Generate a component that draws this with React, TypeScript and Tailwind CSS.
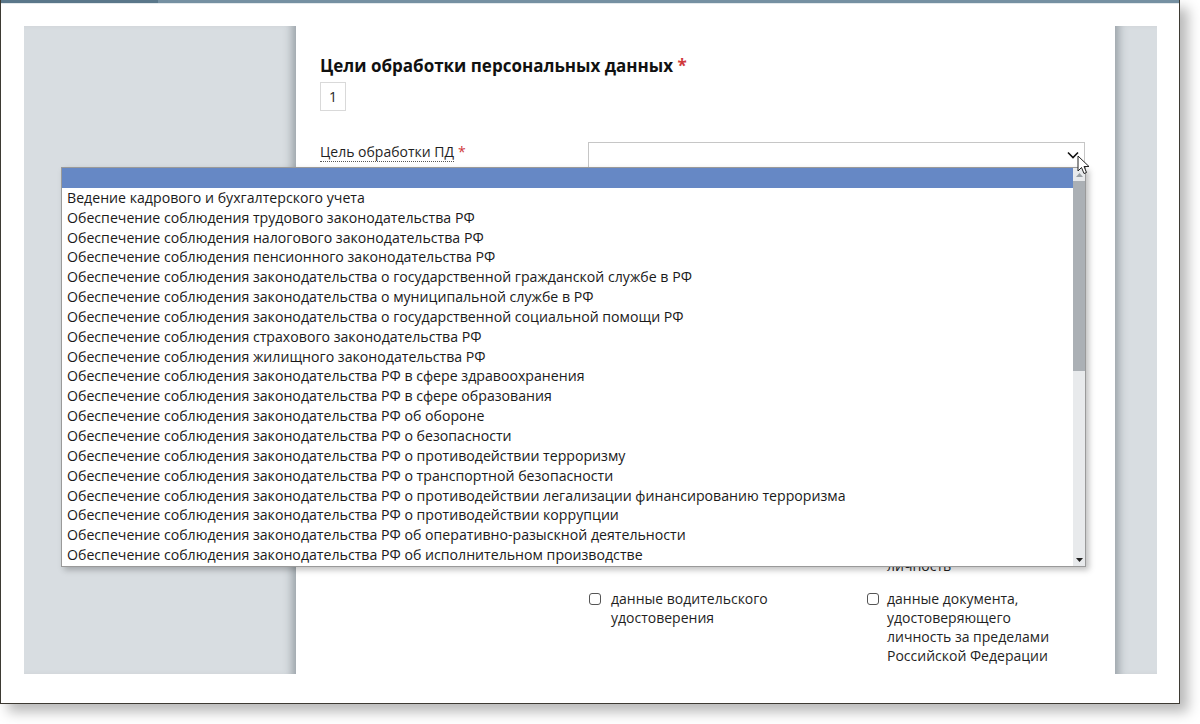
import React from 'react'

const purposes = [
    'Ведение кадрового и бухгалтерского учета',
    'Обеспечение соблюдения трудового законодательства РФ',
    'Обеспечение соблюдения налогового законодательства РФ',
    'Обеспечение соблюдения пенсионного законодательства РФ',
    'Обеспечение соблюдения законодательства о государственной гражданской службе в РФ',
    'Обеспечение соблюдения законодательства о муниципальной службе в РФ',
    'Обеспечение соблюдения законодательства о государственной социальной помощи РФ',
    'Обеспечение соблюдения страхового законодательства РФ',
    'Обеспечение соблюдения жилищного законодательства РФ',
    'Обеспечение соблюдения законодательства РФ в сфере здравоохранения',
    'Обеспечение соблюдения законодательства РФ в сфере образования',
    'Обеспечение соблюдения законодательства РФ об обороне',
    'Обеспечение соблюдения законодательства РФ о безопасности',
    'Обеспечение соблюдения законодательства РФ о противодействии терроризму',
    'Обеспечение соблюдения законодательства РФ о транспортной безопасности',
    'Обеспечение соблюдения законодательства РФ о противодействии легализации финансированию терроризма',
    'Обеспечение соблюдения законодательства РФ о противодействии коррупции',
    'Обеспечение соблюдения законодательства РФ об оперативно-разыскной деятельности',
    'Обеспечение соблюдения законодательства РФ об исполнительном производстве',
]

function Checkbox({lines}: { lines: string[] }) {
    return (
        <div className="flex items-start gap-[10px]">
            <span className="mt-[4px] ml-[1px] h-[12px] w-[12px] flex-none rounded-[3px] border border-[#555]"/>
            <span className="leading-[19px]">
                {lines.map((l) => <div key={l}>{l}</div>)}
            </span>
        </div>
    )
}

function Cursor() {
    return (
        <svg className="absolute left-[1077px] top-[155px]" width="13" height="20" viewBox="0 0 13 20">
            <path d="M1 1 L1 16 L4.5 12.5 L7 18.5 L9.5 17.5 L7 11.5 L12 11.5 Z" fill="#fff" stroke="#222"
                  strokeWidth="1" strokeLinejoin="round"/>
        </svg>
    )
}

function Dropdown() {
    return (
        <div
            className="absolute left-[61px] top-[167px] flex h-[400px] w-[1025px] border border-[#9a9a9a] bg-white shadow-[3px_3px_6px_rgba(0,0,0,0.25)]">
            <div className="flex-1 overflow-hidden text-[14.15px] text-[#1a1a1a]">
                <div className="h-[19.85px] bg-[#6688c5]"/>
                {purposes.map((p) => (
                    <div key={p} className="h-[19.85px] whitespace-nowrap pl-[5px] leading-[19.85px]">{p}</div>
                ))}
            </div>
            <div className="flex w-[12px] flex-none flex-col bg-[#e8eaec]">
                <div className="flex h-[13px] items-center justify-center">
                    <svg width="7" height="4" viewBox="0 0 7 4"><path d="M0 4 L3.5 0 L7 4 Z" fill="#9aa0a5"/></svg>
                </div>
                <div className="h-[190px] bg-[#abb0b5]"/>
                <div className="flex-1"/>
                <div className="flex h-[13px] items-center justify-center">
                    <svg width="7" height="4" viewBox="0 0 7 4"><path d="M0 0 L7 0 L3.5 4 Z" fill="#222"/></svg>
                </div>
            </div>
        </div>
    )
}

export default function App() {
    return (
        <div className="relative h-[724px] w-[1200px] overflow-hidden bg-white"
             style={{fontFamily: '"Open Sans", "Noto Sans", sans-serif'}}>
            <div
                className="h-[704px] w-[1180px] border-x border-b border-[#3d3a33] bg-white shadow-[8px_8px_12px_rgba(0,0,0,0.28)]">
                <div className="flex h-[3px]">
                    <div className="w-[157px] bg-[#5a778a]"/>
                    <div className="flex-1 bg-[#7590a2]"/>
                </div>
                <div className="h-px bg-[#e3e9ec]"/>
                <div className="flex pl-[23px] pt-[22px]">
                    <div
                        className="h-[648px] w-[272px] flex-none bg-[#d8dde1] shadow-[inset_-10px_0_8px_-6px_rgba(80,90,100,0.45)]"/>
                    <div className="w-[819px] flex-none px-[24px] pt-[28px] text-[#1f1f1f]">
                        <h2 className="text-[17px] font-bold leading-6 text-[#111]">
                            Цели обработки персональных данных <span className="text-[#d0393b]">*</span>
                        </h2>
                        <div
                            className="mt-[4px] flex h-[29px] w-[26px] items-center justify-center border border-[#d9d9d9] text-[14px]">1
                        </div>
                        <div className="mt-[31px] flex items-start text-[14px]">
                            <div className="w-[268px] flex-none leading-5">
                                <span className="border-b border-dotted border-[#555]">Цель обработки ПД</span>
                                <span className="ml-1 text-[#d0393b]">*</span>
                            </div>
                            <div className="flex h-[26px] w-[497px] items-center justify-end border border-[#c6c6c6] pr-[5px]">
                                <svg width="12" height="8" viewBox="0 0 12 8">
                                    <path d="M1 1.5 L6 6.5 L11 1.5" fill="none" stroke="#111" strokeWidth="1.6"/>
                                </svg>
                            </div>
                        </div>
                        <div className="ml-[268px] mt-[388px] grid grid-cols-[278px_250px] gap-y-[14px] text-[14px]">
                            <div/>
                            <div className="pl-[21px] leading-[19px]">личность</div>
                            <Checkbox lines={['данные водительского', 'удостоверения']}/>
                            <div className="flex items-start gap-[8px]">
                                <span className="mt-[4px] ml-[1px] h-[12px] w-[12px] flex-none rounded-[3px] border border-[#555]"/>
                                <span className="leading-[19px]">
                                    <div>данные документа,</div>
                                    <div>удостоверяющего</div>
                                    <div>личность за пределами</div>
                                    <div>Российской Федерации</div>
                                </span>
                            </div>
                        </div>
                    </div>
                    <div
                        className="h-[648px] w-[42px] flex-none bg-[#d8dde1] shadow-[inset_10px_0_8px_-6px_rgba(80,90,100,0.45)]"/>
                </div>
            </div>
            <Dropdown/>
            <Cursor/>
        </div>
    )
}
